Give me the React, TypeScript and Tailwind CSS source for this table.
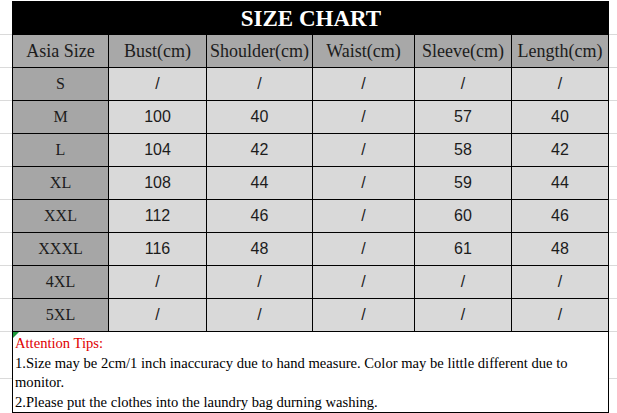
const HEADERS = ['Asia Size', 'Bust(cm)', 'Shoulder(cm)', 'Waist(cm)', 'Sleeve(cm)', 'Length(cm)'];

const ROWS: string[][] = [
  ['S', '/', '/', '/', '/', '/'],
  ['M', '100', '40', '/', '57', '40'],
  ['L', '104', '42', '/', '58', '42'],
  ['XL', '108', '44', '/', '59', '44'],
  ['XXL', '112', '46', '/', '60', '46'],
  ['XXXL', '116', '48', '/', '61', '48'],
  ['4XL', '/', '/', '/', '/', '/'],
  ['5XL', '/', '/', '/', '/', '/'],
];

// excel gridlines outside the table
const MARGIN_ROWS = [35, 33, 33, 33, 33, 33, 33, 33, 33, 33, 47];

function MarginStrip({ className }: { className: string }) {
  return (
    <div className={className}>
      {MARGIN_ROWS.map((h, i) => (
        <div key={i} className="border-b border-[#dadada]" style={{ height: h }} />
      ))}
    </div>
  );
}

export default function App() {
  return (
    <div className="w-[617px] h-[413px] bg-white flex overflow-hidden">
      <MarginStrip className="w-[12px] shrink-0" />

      <div className="w-[597px] shrink-0 mt-[1px] self-start border-l border-t border-black">
        {/* title */}
        <div className="h-[33px] pt-[1px] bg-black flex items-center justify-center text-white font-bold text-[23px] font-['Liberation_Serif',serif]">
          SIZE CHART
        </div>

        <div className="grid grid-cols-[96px_98px_106px_102px_97px_97px]">
          {HEADERS.map((h) => (
            <div
              key={h}
              className="h-[33px] bg-[#a8a8a8] border-r border-b border-black flex items-center justify-center text-[18px] text-[#1c1c1c] whitespace-nowrap font-['Liberation_Serif',serif]"
            >
              {h}
            </div>
          ))}

          {ROWS.map((row) =>
            row.map((cell, ci) =>
              ci === 0 ? (
                <div
                  key={row[0] + ci}
                  className="h-[33px] bg-[#a6a6a6] border-r border-b border-black flex items-center justify-center text-[16px] text-[#1c1c1c] font-['Liberation_Serif',serif]"
                >
                  {cell}
                </div>
              ) : (
                <div
                  key={row[0] + ci}
                  className="h-[33px] bg-[#d9d9d9] border-r border-b border-black flex items-center justify-center text-[16px] text-[#1c1c1c] font-['Liberation_Sans',sans-serif]"
                >
                  {cell}
                </div>
              )
            )
          )}
        </div>

        {/* tips */}
        <div className="relative h-[81px] border-r border-b border-black pt-[2px] pl-[2px] text-[14.6px] leading-[19.5px] text-black font-['Liberation_Serif',serif]">
          <span className="absolute left-0 top-0 w-0 h-0 border-t-[6px] border-r-[6px] border-t-[#1e9a3a] border-r-transparent" />
          <div className="text-[#e00000]">Attention Tips:</div>
          <div>
            1.Size may be 2cm/1 inch inaccuracy due to hand measure. Color may be little different due to
            <br />
            monitor.
          </div>
          <div>2.Please put the clothes into the laundry bag durning washing.</div>
        </div>
      </div>

      <MarginStrip className="flex-1" />
    </div>
  );
}
